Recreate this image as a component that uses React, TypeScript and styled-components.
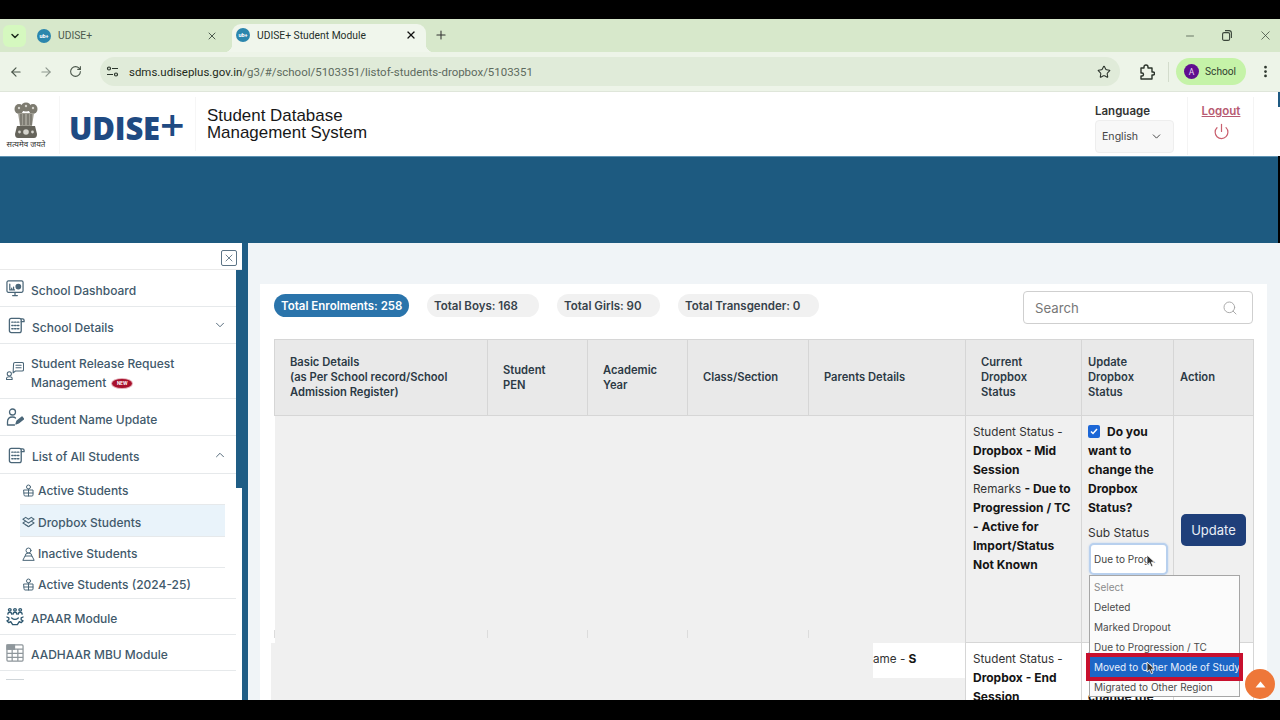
import React from 'react'
import styled, { createGlobalStyle } from 'styled-components'
import {
  ArrowLeft,
  ArrowRight,
  ChevronDown,
  ChevronUp,
  EllipsisVertical,
  Minus,
  Plus,
  Power,
  RotateCw,
  Search,
  Star,
  X,
} from 'lucide-react'

const GlobalStyle = createGlobalStyle`
  html, body { margin: 0; padding: 0; height: 720px; overflow: hidden; background: #000; }
  body { font-family: Inter, "Liberation Sans", sans-serif; }
  * { box-sizing: border-box; }
`

const Page = styled.div`
  width: 1280px;
  height: 720px;
  display: grid;
  grid-template-rows: 19px 33px 40px 64px 87px 457px 20px;
  background: #000;
  overflow: hidden;
`

const BlackBar = styled.div`
  background: #000;
`

/* browser chrome */
const TabStrip = styled.div`
  display: flex;
  align-items: flex-end;
  background: #d7e8cb;
  padding-left: 3px;
  font-family: Roboto, "Liberation Sans", sans-serif;
  font-size: 10.3px;
  color: #3d4a3d;
`

const TabListButton = styled.div`
  width: 23px;
  height: 22px;
  align-self: flex-start;
  margin-top: 6px;
  border-radius: 6px;
  background: #d5f8bf;
  display: flex;
  align-items: center;
  justify-content: center;
  color: #1c2a1c;
`

const Tab = styled.div<{ $active?: boolean }>`
  position: relative;
  width: ${(p) => (p.$active ? '194px' : '202px')};
  height: ${(p) => (p.$active ? '28px' : '33px')};
  margin-left: ${(p) => (p.$active ? '0' : '4px')};
  padding: ${(p) => (p.$active ? '0 9px 6px 4px' : '0 6px 0 7px')};
  display: flex;
  align-items: center;
  gap: 7px;
  background: ${(p) => (p.$active ? '#f0f6ec' : 'transparent')};
  border-radius: 9px 9px 0 0;
  color: ${(p) => (p.$active ? '#26302a' : '#4c5a4e')};
  ${(p) =>
    p.$active &&
    `
    &::before, &::after {
      content: '';
      position: absolute;
      bottom: 0;
      width: 8px;
      height: 8px;
    }
    &::before {
      left: -8px;
      background: radial-gradient(circle at 0 0, transparent 8px, #f0f6ec 8.5px);
    }
    &::after {
      right: -8px;
      background: radial-gradient(circle at 100% 0, transparent 8px, #f0f6ec 8.5px);
    }
  `}
`

const TabTitle = styled.span`
  flex: 1;
`

const Favicon = styled.span`
  width: 14px;
  height: 14px;
  border-radius: 50%;
  background: #2b86ad;
  color: #fff;
  font-size: 5.5px;
  font-weight: 700;
  display: flex;
  align-items: center;
  justify-content: center;
`

const TabClose = styled.span<{ $active?: boolean }>`
  display: flex;
  color: ${(p) => (p.$active ? '#111' : '#4c5a4e')};
  margin-right: ${(p) => (p.$active ? '0' : '8px')};
`

const NewTab = styled.span`
  display: flex;
  margin: 0 0 10px 8px;
  color: #333;
`

const WindowControls = styled.div`
  margin-left: auto;
  align-self: center;
  display: flex;
  align-items: center;
  gap: 26px;
  padding-right: 7px;
  color: #3a463a;
`

const Toolbar = styled.div`
  display: flex;
  align-items: center;
  background: #edf4e8;
  border-bottom: 1px solid #dfe6da;
  padding: 0 0 0 9px;
  color: #4a564a;
  font-family: Roboto, "Liberation Sans", sans-serif;
`

const NavButtons = styled.div`
  display: flex;
  align-items: center;
  gap: 16px;
  width: 91px;
`

const Omnibox = styled.div`
  width: 1020px;
  height: 29px;
  border-radius: 15px;
  background: #e0ebd9;
  display: flex;
  align-items: center;
  padding: 0 9px 0 3px;
  gap: 8px;
  font-size: 11.46px;
`

const SiteIcon = styled.span`
  width: 18px;
  height: 18px;
  display: flex;
  align-items: center;
  justify-content: center;
`

const Url = styled.span`
  flex: 1;
  color: #5d6a5e;
  strong {
    font-weight: 400;
    color: #1e2a20;
  }
`

const ToolbarRight = styled.div`
  display: flex;
  align-items: center;
  margin-left: 19px;
  color: #2b342b;
`

const Divider = styled.span`
  width: 1px;
  height: 20px;
  background: #d3dccc;
  margin: 0 7px 0 13px;
`

const ProfilePill = styled.div`
  width: 70px;
  height: 27px;
  border-radius: 14px;
  background: #c5f3a8;
  display: flex;
  align-items: center;
  padding-left: 8px;
  gap: 6px;
  font-size: 10.2px;
  color: #2f3d2f;
  margin-right: 12px;
`

const Avatar = styled.span`
  width: 15px;
  height: 15px;
  border-radius: 50%;
  background: #5f0f8f;
  color: #e9d6f2;
  font-size: 8.5px;
  display: flex;
  align-items: center;
  justify-content: center;
`

/* site header */
const SiteHeader = styled.header`
  position: relative;
  background: #fff;
  display: flex;
  align-items: center;
  padding-right: 26px;
`

const EmblemBox = styled.div`
  width: 60px;
  height: 58px;
  display: flex;
  flex-direction: column;
  align-items: center;
  padding: 6px 7px 0 0;
  border-right: 1px solid #f6f6f6;
  margin-top: 2px;
`

const EmblemCaption = styled.span`
  font-family: "Noto Sans", "DejaVu Sans", sans-serif;
  font-size: 8px;
  line-height: 9px;
  color: #333;
  white-space: nowrap;
`

const LogoText = styled.div`
  width: 136px;
  height: 54px;
  display: flex;
  align-items: center;
  padding: 7px 0 0 9px;
  border-right: 1px solid #f6f6f6;
  font-family: "Open Sans", "Liberation Sans", sans-serif;
  font-weight: 800;
  font-size: 31px;
  letter-spacing: -0.2px;
  color: #1f4a82;
  span {
    font-size: 43px;
    line-height: 32px;
    font-weight: 600;
    margin-top: -5px;
  }
`

const SystemName = styled.div`
  margin-left: 11px;
  font-family: "Liberation Sans", Arial, sans-serif;
  font-size: 16.95px;
  line-height: 17px;
  color: #171717;
`

const HeaderRight = styled.div`
  margin-left: auto;
  display: flex;
  align-items: stretch;
  height: 58px;
  margin-top: 4px;
`

const LanguageBlock = styled.div`
  width: 93px;
  border-right: 1px solid #f4f4f4;
  display: flex;
  flex-direction: column;
  gap: 2px;
  padding-top: 7px;
  font-size: 11.5px;
  font-weight: 600;
  color: #333;
`

const LanguageSelect = styled.div`
  width: 79px;
  height: 33px;
  background: #f8f8f8;
  border: 1px solid #eeeeee;
  border-radius: 4px;
  display: flex;
  align-items: center;
  justify-content: space-between;
  padding: 0 10px 0 6px;
  font-size: 10.6px;
  font-weight: 400;
  color: #444;
`

const LogoutBlock = styled.div`
  width: 66px;
  border-right: 1px solid #f4f4f4;
  display: flex;
  flex-direction: column;
  align-items: center;
  gap: 5px;
  padding: 7px 0 0 1px;
  font-size: 11.5px;
  font-weight: 600;
  color: #b75a72;
  text-decoration: underline;
`

const PageScrollThumb = styled.div`
  position: absolute;
  right: 0;
  top: 0;
  width: 2px;
  height: 15px;
  background: #1f5a82;
`

const Band = styled.div`
  background: #1d5a80;
  border-top: 1px solid #5f93b3;
  margin-right: 2px;
`

/* main area */
const Body = styled.div`
  display: flex;
  background: #f0f4f7;
  overflow: hidden;
`

const Sidebar = styled.nav`
  position: relative;
  flex: 0 0 248px;
  background: #fff;
  border-right: 6px solid #1f5d85;
  color: #41596b;
  font-size: 12px;
  font-weight: 500;
`

const SideThumb = styled.div`
  position: absolute;
  top: 27px;
  right: -6px;
  width: 12px;
  height: 218px;
  background: #1f5d85;
`

const CloseRow = styled.div`
  height: 27px;
  width: 242px;
  display: flex;
  align-items: center;
  justify-content: flex-end;
  padding: 3px 5px 0 0;
  border-bottom: 1px solid #eaeaea;
`

const CloseBox = styled.span`
  width: 16px;
  height: 16px;
  border: 1px solid #5c7486;
  border-radius: 2px;
  display: flex;
  align-items: center;
  justify-content: center;
  color: #4b6577;
`

const SideRow = styled.div<{ $h: number }>`
  width: 236px;
  height: ${(p) => p.$h}px;
  display: flex;
  align-items: center;
  padding: 0 9px 0 6px;
  gap: 7px;
  border-bottom: 1px solid #e6e9eb;
  line-height: 19px;
`

const RowLabel = styled.span`
  flex: 1;
  padding-top: 4px;
`

const Sub = styled.div<{ $active?: boolean }>`
  width: 205px;
  height: ${(p) => (p.$active ? '32px' : '31px')};
  margin-left: 20px;
  display: flex;
  align-items: center;
  gap: 3px;
  padding: 3px 0 0 2px;
  background: ${(p) => (p.$active ? '#e9f3fa' : 'transparent')};
  border-bottom: 1px solid #e6e9eb;
`

const SubLast = styled(Sub)`
  width: 236px;
  margin-left: 0;
  padding-left: 22px;
`

const NewBadge = styled.span`
  display: inline-flex;
  align-items: center;
  justify-content: center;
  width: 20px;
  height: 9px;
  margin-left: 6px;
  border-radius: 50%;
  background: #a8102c;
  box-shadow: 0 0 0 1px #a8102c55;
  color: #fff;
  font-size: 4.5px;
  font-weight: 700;
  vertical-align: middle;
`

const ShortLine = styled.div`
  width: 18px;
  height: 1px;
  margin: 8px 0 0 6px;
  background: #cfd5d9;
`

const Content = styled.main`
  flex: 1;
  padding: 41px 14px 0 12px;
`

const Panel = styled.section`
  position: relative;
  background: #fff;
  height: 420px;
  padding: 7px 13px 0 14px;
`

const TopRow = styled.div`
  display: flex;
  align-items: flex-start;
  justify-content: space-between;
  height: 48px;
  width: 979px;
`

const Pills = styled.div`
  display: flex;
  gap: 18px;
  padding-top: 3px;
`

const Pill = styled.span<{ $active?: boolean; $w: number }>`
  width: ${(p) => p.$w}px;
  height: 23px;
  padding-left: 7px;
  border-radius: 12px;
  display: flex;
  align-items: center;
  font-size: 11.5px;
  font-weight: 600;
  white-space: nowrap;
  background: ${(p) => (p.$active ? '#2a74ab' : '#f1f1f1')};
  color: ${(p) => (p.$active ? '#fff' : '#37424b')};
`

const SearchBox = styled.div`
  width: 230px;
  height: 33px;
  border: 1px solid #cfcfcf;
  border-radius: 4px;
  display: flex;
  align-items: center;
  justify-content: space-between;
  padding: 1px 14px 0 11px;
  font-size: 13.2px;
  color: #777;
`

const Table = styled.table`
  width: 979px;
  table-layout: fixed;
  border-collapse: collapse;
`

const Th = styled.th<{ $narrow?: boolean }>`
  height: 76px;
  background: #e9e9e9;
  border: 1px solid #d6d6d6;
  padding: 0 ${(p) => (p.$narrow ? '6px' : '15px')};
  text-align: left;
  font-size: 11.2px;
  line-height: 15px;
  font-weight: 600;
  color: #2c3a45;
`

const BlurCell = styled.td`
  position: relative;
  height: 227px;
  background: #f0f0f0;
  box-shadow: -4px 0 0 #f0f0f0;
  &::before {
    content: '';
    position: absolute;
    left: -1px;
    bottom: 5px;
    width: 1px;
    height: 8px;
    background: #dcdcdc;
  }
`

const Td = styled.td<{ $plain?: boolean }>`
  position: relative;
  padding: 7px 7px 6px;
  vertical-align: top;
  border: 1px solid #d6d6d6;
  background: ${(p) => (p.$plain ? '#fff' : '#f0f0f0')};
  font-size: 11.7px;
  line-height: 19px;
  color: #333;
  b {
    font-size: 12px;
    line-height: 1;
    font-weight: 700;
    color: #151515;
  }
`

const UpdateCell = styled(Td)`
  padding: 7px 6px 6px;
`

const ActionCell = styled(Td)`
  vertical-align: middle;
`

const HiddenCell = styled.td`
  padding: 0;
  vertical-align: top;
  background: #f0f0f0;
  box-shadow: -4px 0 0 #f0f0f0;
`

const NamePatch = styled.div`
  width: 92px;
  height: 35px;
  margin-left: auto;
  background: #fff;
  padding-top: 7px;
  font-size: 11.7px;
  line-height: 19px;
  color: #333;
  b {
    font-size: 12px;
    line-height: 1;
    color: #151515;
  }
`

const Check = styled.span`
  display: inline-flex;
  align-items: center;
  justify-content: center;
  width: 12px;
  height: 13px;
  margin-right: 7px;
  vertical-align: 1px;
  border-radius: 2px;
  background: #1b66d6;
  color: #fff;
`

const SubLabel = styled.div`
  margin-top: 5px;
  font-size: 12px;
  color: #333;
`

const SubSelectWrap = styled.div`
  position: relative;
  width: 79px;
  height: 32px;
  margin-top: 1px;
  margin-left: 1px;
  border: 2px solid #b8d0ee;
  border-radius: 5px;
  box-shadow: 0 0 2px #b8d0ee;
  display: flex;
  align-items: center;
  padding-left: 3px;
  background: #fff;
  font-size: 10px;
  white-space: nowrap;
  color: #444;
`

const Menu = styled.div`
  position: absolute;
  left: -2px;
  top: 30px;
  width: 151px;
  height: 122px;
  background: #fbfbfb;
  border: 1px solid #a6a6a6;
  padding-top: 1px;
  z-index: 3;
`

const MenuItem = styled.div<{ $muted?: boolean }>`
  height: 20px;
  padding-left: 4px;
  display: flex;
  align-items: center;
  font-size: 10px;
  white-space: nowrap;
  color: ${(p) => (p.$muted ? '#8b8b8b' : '#4a4a4a')};
`

const HighlightItem = styled(MenuItem)`
  position: relative;
  background: #1c66c6;
  color: #e8f0fb;
  outline: 4px solid #c8102e;
  z-index: 1;
`

const Pointer = styled.svg<{ $x: number; $y: number }>`
  position: absolute;
  left: ${(p) => p.$x}px;
  top: ${(p) => p.$y}px;
  z-index: 4;
`

const UpdateButton = styled.button`
  width: 65px;
  height: 32px;
  border: 0;
  border-radius: 5px;
  background: #1f3f7a;
  color: #e9eef7;
  font-family: inherit;
  font-size: 13px;
`

const ScrollTop = styled.div`
  position: absolute;
  right: -8px;
  top: 385px;
  width: 30px;
  height: 30px;
  border-radius: 50%;
  background: #ee7739;
  display: flex;
  align-items: center;
  justify-content: center;
  z-index: 5;
`

const Arrow = () => (
  <svg width='11' height='7' viewBox='0 0 11 7'>
    <path d='M5.5 0.5 L10.5 6.5 L0.5 6.5 Z' fill='#fff' />
  </svg>
)

const Emblem = () => (
  <svg width='26' height='37' viewBox='0 0 26 37'>
    <g fill='#7d7b70'>
      <ellipse cx='13' cy='5' rx='5' ry='4.500' />
      <ellipse cx='6' cy='7' rx='4.500' ry='5' />
      <ellipse cx='20' cy='7' rx='4.500' ry='5' />
      <circle cx='6' cy='6' r='1.200' fill='#d4d3cc' />
      <circle cx='13' cy='4' r='1.200' fill='#d4d3cc' />
      <circle cx='20' cy='6' r='1.200' fill='#d4d3cc' />
      <path d='M5 11 h16 l-2 13 h-12 z' fill='#a09e94' />
      <path d='M8 12v11M11 12v11M15 12v11M18 12v11' stroke='#5f5d54' strokeWidth='1' />
      <path d='M4 24 h18 l2 8 q0 4 -3 4 h-16 q-3 0 -3 -4 z' fill='#65635a' />
      <circle cx='13' cy='30' r='2.800' fill='#d4d3cc' />
      <circle cx='6.500' cy='30' r='1.400' fill='#d4d3cc' />
      <circle cx='19.500' cy='30' r='1.400' fill='#d4d3cc' />
    </g>
  </svg>
)

const iconProps = {
  fill: 'none',
  stroke: '#4a6678',
  strokeWidth: 1.3,
  strokeLinecap: 'round' as const,
  strokeLinejoin: 'round' as const,
}

const SheetSvg = styled.svg`
  margin-left: 2px;
  flex: none;
`

const DashboardIcon = () => (
  <svg width='18' height='19' viewBox='0 0 19 19' {...iconProps}>
    <rect x='1' y='1.5' width='17' height='12' rx='1.5' />
    <path d='M4 5v6h5M6 9v2M8 8v3' />
    <circle cx='13' cy='7.5' r='2.400' fill='#4a6678' />
    <path d='M9.500 13.500v3M7 17h5' />
  </svg>
)

const SheetIcon = () => (
  <SheetSvg width='17' height='18' viewBox='0 0 18 18' {...iconProps} strokeWidth={1.4}>
    <rect x='1.500' y='2' width='12.500' height='15' rx='2' />
    <path d='M14 2.500h1.500q1.500 0 1.500 1.500v1.500h-3' />
    <path d='M4 6h1.500M7 6h1.500M10 6h1.500M4 9.500h1.500M7 9.500h1.500M10 9.500h1.500M4 13h1.500M7 13h1.500M10 13h1.500' />
  </SheetSvg>
)

const ReleaseIcon = () => (
  <svg width='18' height='20' viewBox='0 0 19 20' {...iconProps} strokeWidth={1.1}>
    <path d='M8 2.500q0-1.500 1.500-1.500h7.500q1.500 0 1.500 1.500v6q0 1.500-1.500 1.500h-7l-2.500 2z' />
    <path d='M10.500 4h5.500M10.500 6.500h5.500' />
    <circle cx='3.500' cy='13' r='2.200' />
    <path d='M0.500 19v-1q0-2 3-2t3 2v1z' />
  </svg>
)

const NameIcon = () => (
  <svg width='18' height='18' viewBox='0 0 18 18' {...iconProps}>
    <circle cx='6.500' cy='4' r='3' />
    <path d='M1.500 17v-3q0-5 5-5 2 0 3 1M1.500 17h7' />
    <path d='M10 16l1-3 5-4 1.500 2-5 4z' fill='#4a6678' />
  </svg>
)

const PersonIcon = () => (
  <svg width='13' height='13' viewBox='0 0 13 13' {...iconProps} strokeWidth={1}>
    <circle cx='6.500' cy='3' r='2' />
    <path d='M2 6h9v5q0 1-1 1h-7q-1 0-1-1z' />
    <path d='M2 9h9M6.500 5v7' />
  </svg>
)

const BoxIcon = () => (
  <svg width='13' height='13' viewBox='0 0 14 13' {...iconProps} strokeWidth={1.1}>
    <path d='M1 3l3-2 3 2 3-2 3 2-3 2 3 2-6 4-6-4 3-2z' />
    <path d='M4 5l3 2 3-2M4 9l3 2 3-2' />
  </svg>
)

const InactiveIcon = () => (
  <svg width='13' height='14' viewBox='0 0 13 14' {...iconProps} strokeWidth={1}>
    <circle cx='6.500' cy='3.500' r='2.500' />
    <path d='M3 9q0-3 3.500-3t3.500 3M1 13l2-4h7l2 4z' />
  </svg>
)

const ApaarIcon = () => (
  <svg width='18' height='19' viewBox='0 0 19 19' {...iconProps} stroke='#2f5870' strokeWidth={1.4}>
    <circle cx='4' cy='2.500' r='1.400' />
    <circle cx='9.500' cy='2.500' r='1.400' />
    <circle cx='15' cy='2.500' r='1.400' />
    <path d='M2 7q0-2 2-2t2 2M7.500 7q0-2 2-2t2 2M13 7q0-2 2-2t2 2' />
    <path d='M1 10l2 1 0 2-2 1 2 2 2-1 2 3h5l2-3 2 1 2-2-2-1v-2l2-1' />
    <path d='M6 11q3.500 3 7 0' />
  </svg>
)

const GridIcon = () => (
  <svg width='18' height='18' viewBox='0 0 19 19' fill='none' stroke='#8f979c' strokeWidth={1.3}>
    <rect x='1' y='1' width='17' height='17' rx='1' />
    <path d='M1 5.500h17M1 10h17M1 14h17M6.500 5.500V18M12.500 5.500V18' />
    <rect x='1' y='1' width='8' height='4.500' fill='#8f979c' />
  </svg>
)

const SiteInfoIcon = () => (
  <svg width='13' height='13' viewBox='0 0 13 13' fill='none' stroke='#2a352b' strokeWidth={1.2}>
    <circle cx='3' cy='3.500' r='1.500' />
    <path d='M6 3.500h6M1 9.500h6' />
    <circle cx='10' cy='9.500' r='1.500' />
  </svg>
)

const PuzzleIcon = () => (
  <svg width='16' height='16' viewBox='0 0 16 16' fill='none' stroke='#2b342b' strokeWidth={1.4} strokeLinejoin='round'>
    <path d='M2 4h3V3q0-2 2-2t2 2v1h4v4h1q1.500 0 1.500 1.500T14 11h-1v4H2v-3h1q1.500 0 1.500-1.500T3 9H2z' />
  </svg>
)

const RestoreIcon = () => (
  <svg width='10' height='11' viewBox='0 0 10 11' fill='none' stroke='#3a463a' strokeWidth={1.1}>
    <rect x='0.600' y='2.600' width='7' height='7.800' rx='1.500' />
    <path d='M3 0.600h4q2.400 0 2.400 2.400v5' />
  </svg>
)

const CheckMark = () => (
  <Check>
    <svg width='8' height='7' viewBox='0 0 8 7' fill='none' stroke='#fff' strokeWidth='1.500'>
      <path d='M1 3.500 L3 5.500 L7 1' />
    </svg>
  </Check>
)

const Cursor = ({ x, y }: { x: number; y: number }) => (
  <Pointer $x={x} $y={y} width='10' height='14' viewBox='0 0 10 14'>
    <path d='M1 1 L1 11 L3.500 8.800 L5.300 12.800 L7 12 L5.300 8.200 L8.500 8 Z' fill='#333' stroke='#fff' strokeWidth='0.8' />
  </Pointer>
)

export default function App() {
  return (
    <Page>
      <GlobalStyle />
      <BlackBar />
      <TabStrip>
        <TabListButton>
          <ChevronDown size={12} strokeWidth={3} />
        </TabListButton>
        <Tab>
          <Favicon>ub+</Favicon>
          <TabTitle>UDISE+</TabTitle>
          <TabClose>
            <X size={12} strokeWidth={2} />
          </TabClose>
        </Tab>
        <Tab $active>
          <Favicon>ub+</Favicon>
          <TabTitle>UDISE+ Student Module</TabTitle>
          <TabClose $active>
            <X size={12} strokeWidth={2.6} />
          </TabClose>
        </Tab>
        <NewTab>
          <Plus size={14} strokeWidth={1.8} />
        </NewTab>
        <WindowControls>
          <Minus size={12} strokeWidth={1.4} />
          <RestoreIcon />
          <X size={15} strokeWidth={1.2} />
        </WindowControls>
      </TabStrip>
      <Toolbar>
        <NavButtons>
          <ArrowLeft size={14} strokeWidth={2} />
          <ArrowRight size={14} strokeWidth={2} color='#8d978d' />
          <RotateCw size={13} strokeWidth={2} />
        </NavButtons>
        <Omnibox>
          <SiteIcon>
            <SiteInfoIcon />
          </SiteIcon>
          <Url>
            <strong>sdms.udiseplus.gov.in</strong>/g3/#/school/5103351/listof-students-dropbox/5103351
          </Url>
          <Star size={14} strokeWidth={1.8} color='#2b342b' />
        </Omnibox>
        <ToolbarRight>
          <PuzzleIcon />
          <Divider />
          <ProfilePill>
            <Avatar>A</Avatar>
            School
          </ProfilePill>
          <EllipsisVertical size={15} strokeWidth={2.4} />
        </ToolbarRight>
      </Toolbar>
      <SiteHeader>
        <EmblemBox>
          <Emblem />
          <EmblemCaption>सत्यमेव जयते</EmblemCaption>
        </EmblemBox>
        <LogoText>
          UDISE<span>+</span>
        </LogoText>
        <SystemName>
          Student Database
          <br />
          Management System
        </SystemName>
        <HeaderRight>
          <LanguageBlock>
            Language
            <LanguageSelect>
              English
              <ChevronDown size={13} strokeWidth={1.8} />
            </LanguageSelect>
          </LanguageBlock>
          <LogoutBlock>
            Logout
            <Power size={17} strokeWidth={1.7} color='#c9606f' />
          </LogoutBlock>
        </HeaderRight>
        <PageScrollThumb />
      </SiteHeader>
      <Band />
      <Body>
        <Sidebar>
          <SideThumb />
          <CloseRow>
            <CloseBox>
              <X size={12} strokeWidth={1.6} />
            </CloseBox>
          </CloseRow>
          <SideRow $h={37}>
            <DashboardIcon />
            <RowLabel>School Dashboard</RowLabel>
          </SideRow>
          <SideRow $h={37}>
            <SheetIcon />
            <RowLabel>School Details</RowLabel>
            <ChevronDown size={14} strokeWidth={1.5} />
          </SideRow>
          <SideRow $h={55}>
            <ReleaseIcon />
            <RowLabel>
              Student Release Request Management
              <NewBadge>NEW</NewBadge>
            </RowLabel>
          </SideRow>
          <SideRow $h={37}>
            <NameIcon />
            <RowLabel>Student Name Update</RowLabel>
          </SideRow>
          <SideRow $h={38}>
            <SheetIcon />
            <RowLabel>List of All Students</RowLabel>
            <ChevronUp size={14} strokeWidth={1.5} />
          </SideRow>
          <Sub>
            <PersonIcon />
            Active Students
          </Sub>
          <Sub $active>
            <BoxIcon />
            Dropbox Students
          </Sub>
          <Sub>
            <InactiveIcon />
            Inactive Students
          </Sub>
          <SubLast>
            <PersonIcon />
            Active Students (2024-25)
          </SubLast>
          <SideRow $h={36}>
            <ApaarIcon />
            <RowLabel>APAAR Module</RowLabel>
          </SideRow>
          <SideRow $h={36}>
            <GridIcon />
            <RowLabel>AADHAAR MBU Module</RowLabel>
          </SideRow>
          <ShortLine />
        </Sidebar>
        <Content>
          <Panel>
            <TopRow>
              <Pills>
                <Pill $active $w={135}>
                  Total Enrolments: 258
                </Pill>
                <Pill $w={112}>Total Boys: 168</Pill>
                <Pill $w={103}>Total Girls: 90</Pill>
                <Pill $w={141}>Total Transgender: 0</Pill>
              </Pills>
              <SearchBox>
                Search
                <Search size={16} strokeWidth={1.4} color='#a5a5a5' />
              </SearchBox>
            </TopRow>
            <Table>
              <colgroup>
                <col width={213} />
                <col width={100} />
                <col width={100} />
                <col width={121} />
                <col width={157} />
                <col width={116} />
                <col width={92} />
                <col width={80} />
              </colgroup>
              <thead>
                <tr>
                  <Th>
                    Basic Details
                    <br />
                    (as Per School record/School Admission Register)
                  </Th>
                  <Th>
                    Student
                    <br />
                    PEN
                  </Th>
                  <Th>
                    Academic
                    <br />
                    Year
                  </Th>
                  <Th>Class/Section</Th>
                  <Th>Parents Details</Th>
                  <Th>
                    Current
                    <br />
                    Dropbox
                    <br />
                    Status
                  </Th>
                  <Th $narrow>
                    Update
                    <br />
                    Dropbox
                    <br />
                    Status
                  </Th>
                  <Th $narrow>Action</Th>
                </tr>
              </thead>
              <tbody>
                <tr>
                  <BlurCell />
                  <BlurCell />
                  <BlurCell />
                  <BlurCell />
                  <BlurCell />
                  <Td>
                    Student Status - <b>Dropbox - Mid Session</b>
                    <br />
                    Remarks <b>- Due to Progression / TC - Active for Import/Status Not Known</b>
                  </Td>
                  <UpdateCell>
                    <CheckMark />
                    <b>Do you want to change the Dropbox Status?</b>
                    <SubLabel>Sub Status</SubLabel>
                    <SubSelectWrap>
                      Due to Prog..
                      <Cursor x={55} y={9} />
                      <Menu>
                        <MenuItem $muted>Select</MenuItem>
                        <MenuItem>Deleted</MenuItem>
                        <MenuItem>Marked Dropout</MenuItem>
                        <MenuItem>Due to Progression / TC</MenuItem>
                        <HighlightItem>Moved to Other Mode of Study</HighlightItem>
                        <MenuItem>Migrated to Other Region</MenuItem>
                        <Cursor x={56} y={85} />
                      </Menu>
                    </SubSelectWrap>
                  </UpdateCell>
                  <ActionCell>
                    <UpdateButton>Update</UpdateButton>
                  </ActionCell>
                </tr>
                <tr>
                  <HiddenCell colSpan={5}>
                    <NamePatch>
                      ame - <b>S</b>
                    </NamePatch>
                  </HiddenCell>
                  <Td $plain>
                    Student Status - <b>Dropbox - End Session</b>
                  </Td>
                  <UpdateCell $plain>
                    <CheckMark />
                    <b>Do you want to change the Dropbox Status?</b>
                  </UpdateCell>
                  <Td $plain />
                </tr>
              </tbody>
            </Table>
            <ScrollTop>
              <Arrow />
            </ScrollTop>
          </Panel>
        </Content>
      </Body>
      <BlackBar />
    </Page>
  )
}
